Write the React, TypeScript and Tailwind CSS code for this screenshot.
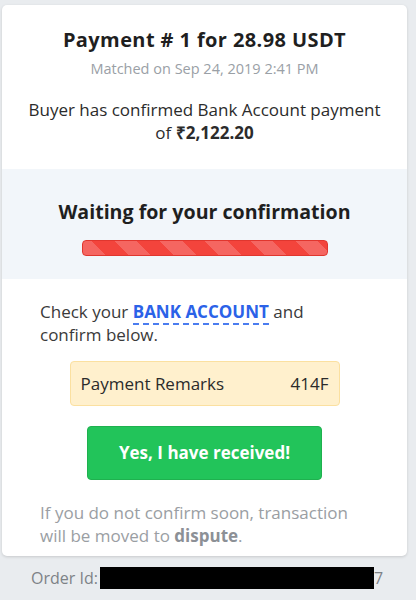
export default function App() {
  return (
    <div className="min-h-[600px] bg-[#e9ecef] pt-[5px] font-['Open_Sans',sans-serif]">
      <div className="ml-[2px] w-[405px] overflow-hidden rounded-[5px] bg-white shadow-[0_1px_3px_rgba(0,0,0,0.15)]">
        <div className="flex flex-col items-center px-2 pt-[21px] pb-[25px] text-center">
          <h1 className="text-[20px] font-bold leading-[28px] tracking-[0.4px] text-[#1f1f1f]">
            Payment # 1 for 28.98 USDT
          </h1>
          <p className="mt-[5px] text-[14.5px] leading-[20px] text-[#9aa0a6]">Matched on Sep 24, 2019 2:41 PM</p>
          <p className="mt-[19px] text-[17px] leading-[23px] text-[#2b2b2b]">
            Buyer has confirmed Bank Account payment
            <br />
            of <span className="font-bold">₹2,122.20</span>
          </p>
        </div>

        <div className="flex flex-col items-center bg-[#f2f6fa] pt-[29px] pb-[23px]">
          <h2 className="text-[19.6px] font-bold leading-[28px] text-[#1f1f1f]">Waiting for your confirmation</h2>
          <div className="mt-[14px] h-[16px] w-[246px] rounded-[4px] border border-[#e0362e] bg-[repeating-linear-gradient(45deg,#f56661_0px,#f56661_16px,#f3443c_16px,#f3443c_32px)]" />
        </div>

        <div className="px-[38px] pt-[21px] pb-[9px]">
          <p className="text-[17px] leading-[23px] text-[#3a3a3a]">
            Check your{' '}
            <span className="border-b-2 border-dashed border-[#4a7cf0] font-bold text-[#2b62e8]">BANK ACCOUNT</span>{' '}
            and
            <br />
            confirm below.
          </p>
          <div className="mx-auto mt-[15px] flex h-[45px] w-[270px] items-center justify-between rounded-[4px] border border-[#fbe0a0] bg-[#fff0cd] px-[10px] text-[17px] text-[#2b2b2b]">
            <span>Payment Remarks</span>
            <span>414F</span>
          </div>
          <div className="mt-[20px] flex justify-center">
            <button className="h-[54px] w-[235px] rounded-[4px] border border-[#1fb14f] bg-[#22c45a] text-[17px] font-bold text-white">
              Yes, I have received!
            </button>
          </div>
          <p className="mt-[21px] text-[17px] leading-[23px] text-[#9a9ea3]">
            If you do not confirm soon, transaction
            <br />
            will be moved to <span className="font-bold text-[#8c9096]">dispute</span>.
          </p>
        </div>
      </div>

      <div className="mt-[11px] flex items-center pl-[31px] text-[16px] leading-[22px] text-[#7d8287]">
        <span>Order Id:</span>
        <span className="ml-[2px] h-[22px] w-[274px] bg-black" />
        <span>7</span>
      </div>
    </div>
  )
}
